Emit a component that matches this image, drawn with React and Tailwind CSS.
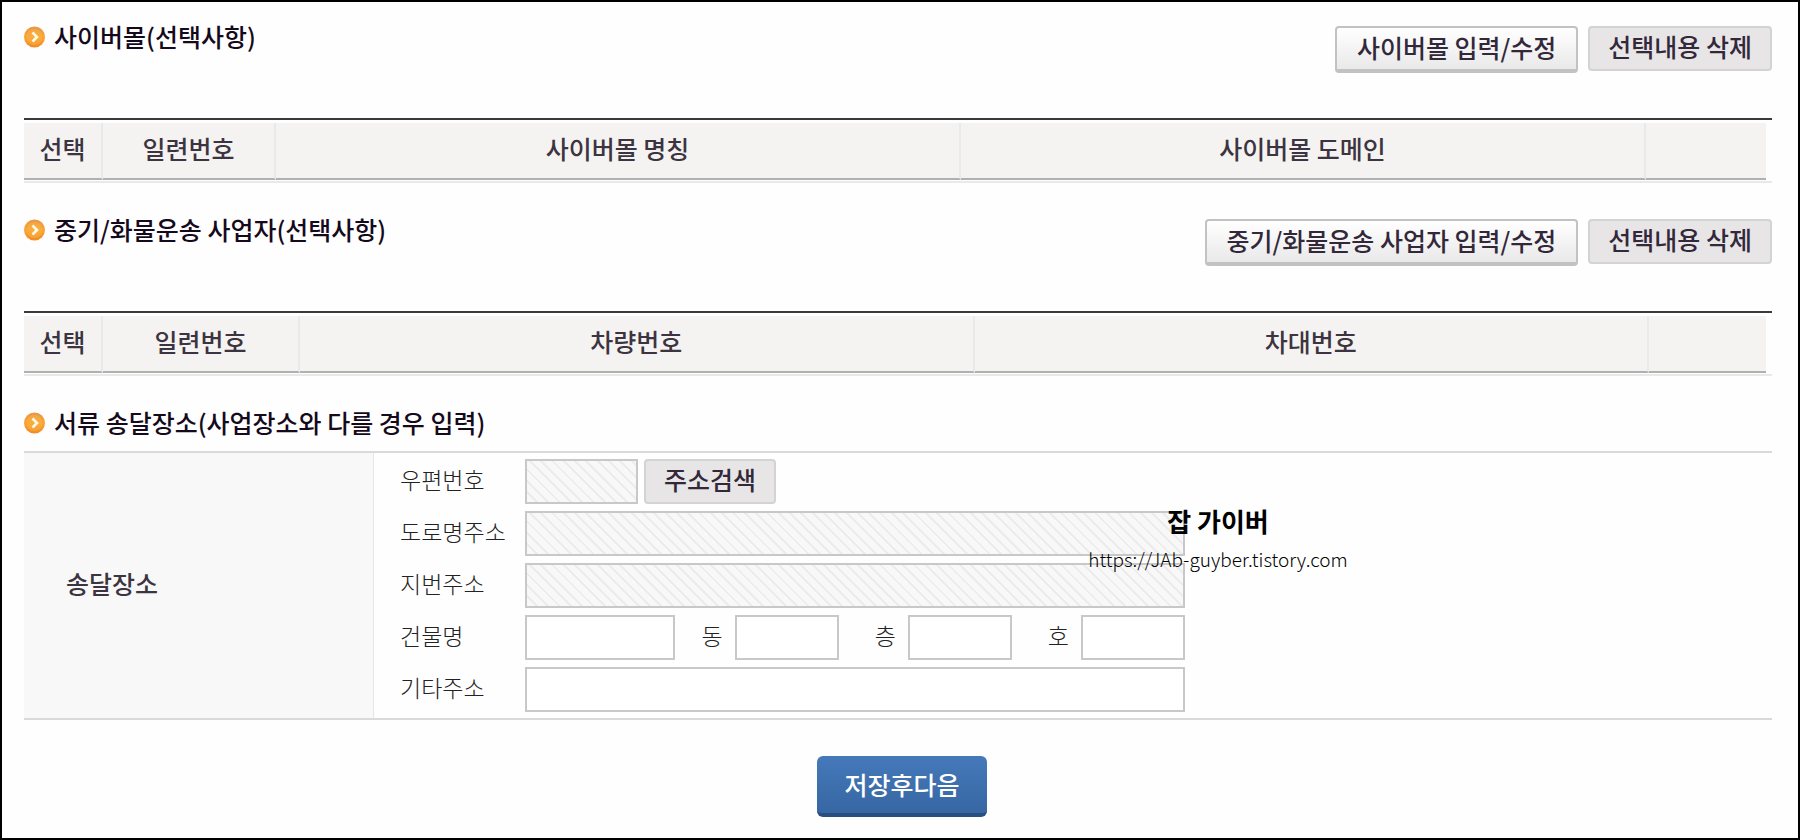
import React, { useState } from 'react';

const mallColumns = [
  { label: '선택', width: 'w-[79px]' },
  { label: '일련번호', width: 'w-[173px]' },
  { label: '사이버몰 명칭', width: '' },
  { label: '사이버몰 도메인', width: '' },
  { label: '', width: 'w-[120px]' },
];

const vehicleColumns = [
  { label: '선택', width: 'w-[79px]' },
  { label: '일련번호', width: 'w-[197px]' },
  { label: '차량번호', width: '' },
  { label: '차대번호', width: '' },
  { label: '', width: 'w-[117px]' },
];

const hatched =
  'bg-[repeating-linear-gradient(45deg,#f8f8f8_0px,#f8f8f8_6px,#ececec_6px,#ececec_8px)]';

const BulletIcon = () => (
  <svg viewBox="0 0 22 22" className="w-[22px] h-[22px] shrink-0" aria-hidden="true">
    <defs>
      <linearGradient id="bullet" x1="0" y1="0" x2="0" y2="1">
        <stop offset="0" stopColor="#e8964a" />
        <stop offset="0.5" stopColor="#f9a534" />
        <stop offset="1" stopColor="#f08a24" />
      </linearGradient>
    </defs>
    <circle cx="10.5" cy="11" r="10.5" fill="url(#bullet)" />
    <circle cx="10.5" cy="11" r="8" fill="#fdb548" opacity="0.45" />
    <path d="M8.5 6.5 L13 11 L8.5 15.5" fill="none" stroke="#fffbe8" strokeWidth="2.6" />
  </svg>
);

const SectionTitle = ({ children }) => (
  <div className="flex items-center gap-2 h-[22px]">
    <BulletIcon />
    <h2 className="pb-0.5 text-[25px] leading-[22px] font-medium text-[#150a1c] whitespace-nowrap">{children}</h2>
  </div>
);

const EditButton = ({ children }) => (
  <button
    type="button"
    className="h-[47px] px-5 pb-0.5 text-[25px] leading-none font-medium text-[#32283a] whitespace-nowrap bg-linear-to-b from-white to-[#e9e9e9] border-2 border-b-4 border-[#c2c2c2] rounded-[4px]"
  >
    {children}
  </button>
);

const GrayButton = ({ children }) => (
  <button
    type="button"
    className="h-[45px] px-[18px] pb-1 text-[25px] leading-none font-medium text-[#32283a] whitespace-nowrap bg-[#e7e5e6] border-2 border-[#d3d3d3] rounded-[4px]"
  >
    {children}
  </button>
);

const ListSection = ({ title, editLabel, columns }) => (
  <section className="mb-9">
    <div className="flex items-start justify-between h-[92px]">
      <SectionTitle>{title}</SectionTitle>
      <div className="flex items-start gap-2.5">
        <EditButton>{editLabel}</EditButton>
        <GrayButton>선택내용 삭제</GrayButton>
      </div>
    </div>
    <div className="border-t-2 border-t-[#3a3a3c] border-b-2 border-b-[#e9e9e9] pt-[3px] pb-px pr-1.5">
      <table className="w-full table-fixed border-separate border-spacing-0">
        <thead>
          <tr>
            {columns.map((col, i) => (
              <th
                key={i}
                scope="col"
                className={`${col.width} h-[57px] p-0 pb-1 text-center text-[25px] leading-none font-medium text-[#3c3440] bg-[#f4f3f1] border-b-2 border-b-[#b0b0ae] ${
                  i < columns.length - 1 ? 'border-r-2 border-r-[#e9e9e9]' : ''
                }`}
              >
                {col.label}
              </th>
            ))}
          </tr>
        </thead>
      </table>
    </div>
  </section>
);

const fieldBase = 'h-[45px] px-2 text-[23px] text-[#333] border-2 border-[#c8c8c8] outline-none';

const FieldRow = ({ id, label, children }) => (
  <div className="flex items-center h-[45px]">
    <label htmlFor={id} className="w-[125px] shrink-0 pb-1 text-[23px] leading-none font-light text-[#222]">
      {label}
    </label>
    {children}
  </div>
);

const UnitField = ({ id, label, value, onChange }) => (
  <div className="flex items-center gap-3">
    <label htmlFor={id} className="pb-1 text-[23px] leading-none font-light text-[#222]">
      {label}
    </label>
    <input id={id} value={value} onChange={onChange} className={`${fieldBase} w-[104px] bg-white`} />
  </div>
);

const App = () => {
  const [address, setAddress] = useState({ building: '', dong: '', floor: '', ho: '', etc: '' });

  const update = (key) => (e) => setAddress((prev) => ({ ...prev, [key]: e.target.value }));

  return (
    <main className="min-h-screen bg-[#fefefe] border-2 border-black pt-6 pb-4 font-['Noto_Sans_CJK_KR',sans-serif]">
      <form onSubmit={(e) => e.preventDefault()}>
        <div className="pl-[22px] pr-[26px]">
          <ListSection title="사이버몰(선택사항)" editLabel="사이버몰 입력/수정" columns={mallColumns} />
          <ListSection
            title="중기/화물운송 사업자(선택사항)"
            editLabel="중기/화물운송 사업자 입력/수정"
            columns={vehicleColumns}
          />

          <section>
            <SectionTitle>서류 송달장소(사업장소와 다를 경우 입력)</SectionTitle>
            <div className="mt-[17px] flex border-y-2 border-[#d9d9d9]">
              <div className="w-[350px] shrink-0 flex items-center pl-[42px] pb-1 bg-[#f8f8f8] border-r border-[#e6e6e6] text-[25px] leading-none font-medium text-[#3c3440]">
                송달장소
              </div>
              <div className="relative w-[811px] ml-[26px] pt-1.5 pb-1.5 flex flex-col gap-[7px]">
                <FieldRow id="zip" label="우편번호">
                  <input id="zip" readOnly className={`${fieldBase} ${hatched} w-[113px] mr-1.5`} />
                  <GrayButton>주소검색</GrayButton>
                </FieldRow>
                <FieldRow id="road" label="도로명주소">
                  <input id="road" readOnly className={`${fieldBase} ${hatched} w-[660px]`} />
                </FieldRow>
                <FieldRow id="jibun" label="지번주소">
                  <input id="jibun" readOnly className={`${fieldBase} ${hatched} w-[660px]`} />
                </FieldRow>
                <FieldRow id="building" label="건물명">
                  <div className="w-[660px] flex items-center justify-between">
                    <input
                      id="building"
                      value={address.building}
                      onChange={update('building')}
                      className={`${fieldBase} w-[150px] bg-white`}
                    />
                    <div className="flex items-center gap-9">
                      <UnitField id="dong" label="동" value={address.dong} onChange={update('dong')} />
                      <UnitField id="floor" label="층" value={address.floor} onChange={update('floor')} />
                      <UnitField id="ho" label="호" value={address.ho} onChange={update('ho')} />
                    </div>
                  </div>
                </FieldRow>
                <FieldRow id="etc" label="기타주소">
                  <input
                    id="etc"
                    value={address.etc}
                    onChange={update('etc')}
                    className={`${fieldBase} w-[660px] bg-white`}
                  />
                </FieldRow>

                {/* Blog signature */}
                <div className="absolute left-[688px] top-[54px] w-[260px] flex flex-col items-center gap-3 text-black whitespace-nowrap pointer-events-none">
                  <strong className="text-[26px] leading-7 font-bold">잡 가이버</strong>
                  <span className="text-[19px] leading-6 font-light">https://JAb-guyber.tistory.com</span>
                </div>
              </div>
            </div>
          </section>
        </div>

        <div className="mt-9 pl-1 flex justify-center">
          <button
            type="submit"
            className="h-[61px] px-[27px] text-[25px] leading-none font-medium text-white bg-linear-to-b from-[#4579ba] to-[#3767a3] border-b-4 border-[#294f80] rounded-[6px]"
          >
            저장후다음
          </button>
        </div>
      </form>
    </main>
  );
};

export default App;
